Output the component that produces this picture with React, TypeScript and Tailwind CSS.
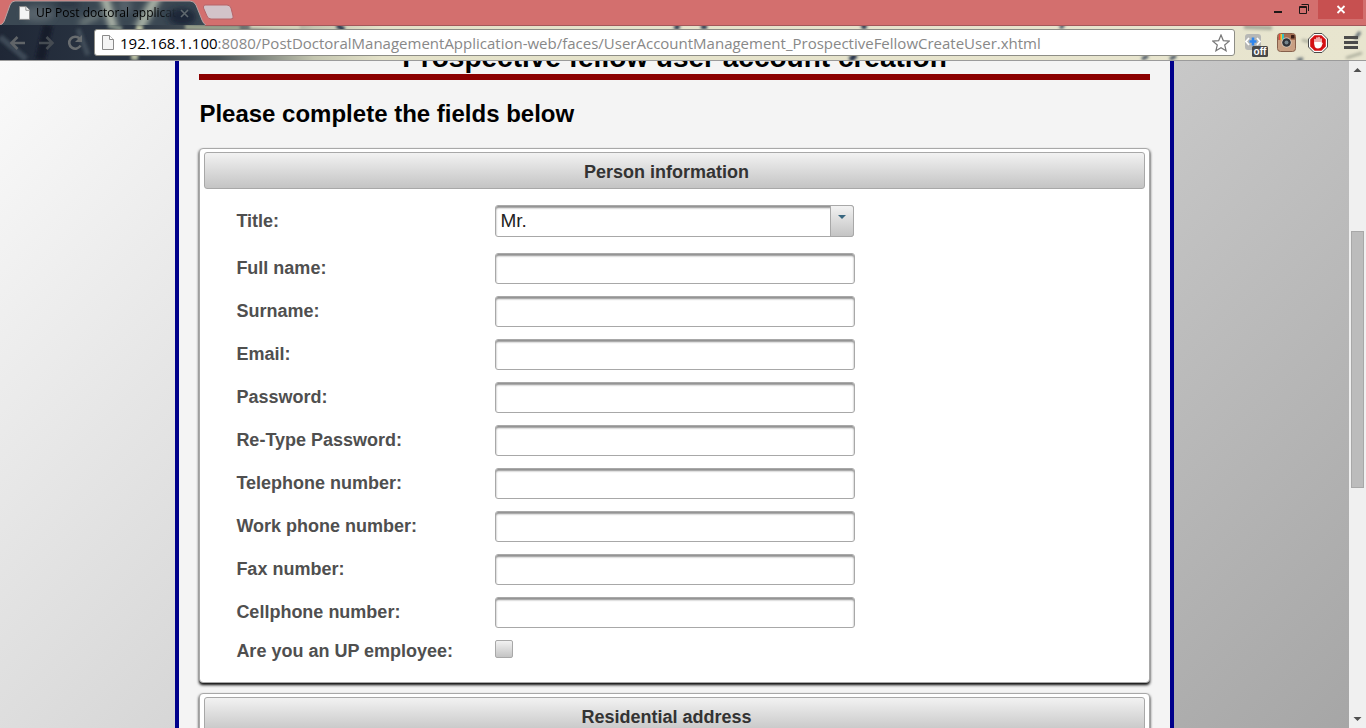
import React from "react";

type Field = { id: string; label: string; type: string };

const fields: Field[] = [
  { id: "fullName", label: "Full name:", type: "text" },
  { id: "surname", label: "Surname:", type: "text" },
  { id: "email", label: "Email:", type: "email" },
  { id: "password", label: "Password:", type: "password" },
  { id: "retype", label: "Re-Type Password:", type: "password" },
  { id: "telephone", label: "Telephone number:", type: "tel" },
  { id: "workPhone", label: "Work phone number:", type: "tel" },
  { id: "fax", label: "Fax number:", type: "tel" },
  { id: "cellphone", label: "Cellphone number:", type: "tel" },
];

const labelClass = "pb-0.5 text-lg leading-[22px] font-bold text-[#4f4f4f]";
const inputClass =
  "h-[31px] w-[360px] rounded-[3px] border border-[#a8a8a8] bg-white px-1 text-lg text-[#222222] shadow-[inset_0_2px_2px_#8f8f8f] outline-none";

function PageIcon({ className }: { className: string }) {
  return (
    <svg viewBox="0 0 12 15" className={className} aria-hidden="true">
      <path d="M.5 .5H7.5L11.5 4.5V14.5H.5Z" fill="#f4f4f4" stroke="#8a8a8a" />
      <path d="M7.5 .5V4.5H11.5" fill="#ffffff" stroke="#8a8a8a" />
    </svg>
  );
}

function TabShape() {
  return (
    <svg viewBox="0 0 206 25" className="absolute inset-0 h-full w-full" aria-hidden="true">
      <defs>
        <clipPath id="tabClip">
          <path d="M0 25C3 24 4 22 5 19L10 5Q11.500 1 15 1H190Q194 1 196 5L202 20Q203.500 24 206 25Z" />
        </clipPath>
        <filter id="tabBlur" x="-50%" y="-50%" width="200%" height="200%">
          <feGaussianBlur stdDeviation="3" />
        </filter>
      </defs>
      <g clipPath="url(#tabClip)">
        <rect width="206" height="25" fill="#3b4853" />
        <g filter="url(#tabBlur)">
          <ellipse cx="38" cy="14" rx="16" ry="8" fill="#56626a" />
          <ellipse cx="68" cy="4" rx="14" ry="4" fill="#2b3543" />
          <path d="M104 -5L114 30" stroke="#b9c1b2" strokeWidth="8" />
          <path d="M158 -5L138 30" stroke="#b0b9ab" strokeWidth="9" />
          <path d="M80 24L100 14" stroke="#7f8a88" strokeWidth="5" />
          <ellipse cx="125" cy="6" rx="7" ry="9" fill="#56626a" />
          <ellipse cx="182" cy="17" rx="14" ry="9" fill="#1c2839" />
        </g>
      </g>
      <path
        d="M0 25C3 24 4 22 5 19L10 5Q11.500 1 15 1H190Q194 1 196 5L202 20Q203.500 24 206 25"
        fill="none"
        stroke="#b9a4a4"
        strokeWidth="1"
      />
    </svg>
  );
}

function ToolbarTexture() {
  return (
    <svg
      viewBox="0 0 1366 35"
      preserveAspectRatio="none"
      className="absolute inset-0 h-full w-full"
      aria-hidden="true"
    >
      <defs>
        <linearGradient id="toolbarFill" x1="0" x2="1" y1="0" y2="0">
          <stop offset="0" stopColor="#1f2736" />
          <stop offset=".1" stopColor="#2c3745" />
          <stop offset=".16" stopColor="#4a5459" />
          <stop offset=".23" stopColor="#c4c6b0" />
          <stop offset=".28" stopColor="#e4e2c9" />
          <stop offset="1" stopColor="#e8e5cf" />
        </linearGradient>
        <filter id="toolbarBlur" x="-50%" y="-50%" width="200%" height="200%">
          <feGaussianBlur stdDeviation="1.500" />
        </filter>
      </defs>
      <rect width="1366" height="35" fill="url(#toolbarFill)" />
      <g filter="url(#toolbarBlur)" fill="none">
        <path d="M0 12L26 34" stroke="#3c4957" strokeWidth="6" />
        <path d="M48 0L40 35" stroke="#121a29" strokeWidth="10" />
        <path d="M78 4L88 30" stroke="#3f4c58" strokeWidth="5" />
        <path d="M108 0L122 4" stroke="#7f8c83" strokeWidth="5" />
        <path d="M140 0L134 35" stroke="#b9bfa2" strokeWidth="7" />
        <path d="M185 2L240 3" stroke="#9da58f" strokeWidth="5" />
        <path d="M250 1L300 2" stroke="#d8d7bd" strokeWidth="5" />
        <path d="M337 0L344 5" stroke="#26364b" strokeWidth="5" />
        <path d="M675 4L679 0" stroke="#26364b" strokeWidth="5" />
        <path d="M704 0V4" stroke="#1d2b44" strokeWidth="6" />
        <path d="M862 3L866 0M850 35L856 30" stroke="#1d2b44" strokeWidth="5" />
        <path d="M1060 3L1064 0M1142 34L1148 31M1170 34L1176 31" stroke="#26364b" strokeWidth="3" />
        <path d="M1244 2L1272 3" stroke="#a3a696" strokeWidth="4" />
        <path d="M1297 35L1303 34M1355 14L1360 7" stroke="#4d5a66" strokeWidth="3" />
        <path d="M1302 15L1310 17M1346 33L1362 28" stroke="#9a9d8d" strokeWidth="2" />
      </g>
    </svg>
  );
}

function BrowserChrome() {
  return (
    <header className="relative shrink-0 border-b border-[#9b9b9b] font-['Open_Sans','Noto_Sans',sans-serif]">
      <div className="flex h-[25px] justify-between bg-[#d36f6e]">
        <div className="flex">
          <div className="relative flex h-[25px] w-[206px] items-center pt-px pl-[19px]">
            <TabShape />
            <PageIcon className="relative h-[14px] w-[11px] shrink-0" />
            <span className="relative ml-1.5 w-[142px] overflow-hidden bg-gradient-to-r from-black from-85% to-transparent bg-clip-text text-xs leading-4 whitespace-nowrap text-transparent">
              UP Post doctoral application
            </span>
            <button aria-label="Close tab" className="relative ml-0.5 h-[9px] w-[9px]">
              <svg viewBox="0 0 9 9" className="h-full w-full">
                <path d="M1 1L8 8M8 1L1 8" stroke="#5f686e" strokeWidth="1.600" />
              </svg>
            </button>
          </div>
          <button aria-label="New tab" className="-ml-1 h-5 w-8 pt-1">
            <svg viewBox="0 0 32 16" className="h-4 w-8">
              <path
                d="M3 1H25Q28 1 29 4L31 12Q32 15 29 15H9Q6 15 5 12L1.500 4Q1 1 3 1Z"
                fill="#d2c3c9"
                stroke="#b66468"
              />
            </svg>
          </button>
        </div>
        <div className="flex h-5 items-start pr-[3px]">
          <button aria-label="Minimize" className="h-5 w-[27px]">
            <svg viewBox="0 0 27 20" className="h-full w-full">
              <path d="M10 11H18V13H10Z" fill="#1f1717" />
            </svg>
          </button>
          <button aria-label="Restore" className="h-5 w-[27px]">
            <svg viewBox="0 0 27 20" className="h-full w-full" fill="none" stroke="#1f1717">
              <path d="M8.500 6.500H15.500V13.500H8.500ZM8 7.500H16M10.500 4.500H17.500V11" />
            </svg>
          </button>
          <button aria-label="Close" className="h-[19px] w-[45px] bg-[#c75050]">
            <svg viewBox="0 0 45 19" className="h-full w-full">
              <path d="M19.500 6L26.500 13M26.500 6L19.500 13" stroke="#ffffff" strokeWidth="1.800" />
            </svg>
          </button>
        </div>
      </div>

      <div className="relative flex h-[35px] items-center pr-2 pl-2">
        <ToolbarTexture />
        <div className="absolute top-0 right-0 left-[205px] h-px bg-[#a2575a]" />
        <button aria-label="Back" className="relative h-[18px] w-[18px]">
          <svg viewBox="0 0 18 18" className="h-full w-full" fill="none" stroke="#606468" strokeWidth="2.600">
            <path d="M17 9H4M9.500 3L3.500 9L9.500 15" />
          </svg>
        </button>
        <button aria-label="Forward" className="relative ml-3 h-[18px] w-[18px]">
          <svg viewBox="0 0 18 18" className="h-full w-full" fill="none" stroke="#454b52" strokeWidth="2.600">
            <path d="M1 9H14M8.500 3L14.500 9L8.500 15" />
          </svg>
        </button>
        <button aria-label="Reload" className="relative ml-2.5 h-[18px] w-[18px]">
          <svg viewBox="0 0 18 18" className="h-full w-full" fill="none" stroke="#686c6f" strokeWidth="2.600">
            <path d="M13.500 4.500A6 6 0 1 0 14.500 11.500" />
            <path d="M16 1V8H9Z" fill="#686c6f" stroke="none" />
          </svg>
        </button>
        <div className="relative ml-2.5 flex h-[27px] min-w-0 flex-1 items-center rounded-[3px] border border-[#8d8d86] bg-white pr-1 pl-[7px]">
          <PageIcon className="h-[15px] w-3 shrink-0" />
          <div className="ml-1.5 min-w-0 flex-1 overflow-hidden text-[15px] leading-6 whitespace-nowrap text-[#888888]">
            <span className="text-black">192.168.1.100</span>
            :8080/PostDoctoralManagementApplication-web/faces/UserAccountManagement_ProspectiveFellowCreateUser.xhtml
          </div>
          <button aria-label="Bookmark" className="h-[18px] w-[18px] shrink-0">
            <svg viewBox="0 0 18 18" className="h-full w-full">
              <path
                d="M9 1L11.300 6.600L17.200 7.100L12.700 11L14.100 16.800L9 13.700L3.900 16.800L5.300 11L.8 7.100L6.700 6.600Z"
                fill="#ffffff"
                stroke="#777777"
                strokeWidth="1.200"
              />
            </svg>
          </button>
        </div>
        <div className="relative ml-2.5 flex h-7 items-center gap-2">
          <button aria-label="Extension off" className="h-7 w-6">
            <svg viewBox="0 0 24 28" className="h-full w-full">
              <rect x="0" y="5" width="16" height="16" rx="3" fill="#b6b7b5" />
              <path d="M4 9L1 12.500L4 16M12 9L15 12.500L12 16" fill="none" stroke="#ffffff" strokeWidth="1.700" />
              <path d="M8 8.500V16.500M4.500 12.500H11.500" stroke="#2f86ee" strokeWidth="2.600" />
              <rect x="7" y="17" width="16" height="11" rx="1.500" fill="#484848" />
              <text x="15" y="26" textAnchor="middle" fontSize="10" fontWeight="700" fill="#ffffff" fontFamily="Liberation Sans, sans-serif">
                off
              </text>
            </svg>
          </button>
          <button aria-label="Camera" className="h-[19px] w-[19px]">
            <svg viewBox="0 0 19 19" className="h-full w-full">
              <rect x=".5" y=".5" width="18" height="18" rx="3" fill="#c9a083" stroke="#86604c" />
              <path d="M1 7V3Q1 1 3 1H16Q18 1 18 3V7Z" fill="#a56f52" />
              <path d="M2 1H3.500V7H2Z" fill="#e4483c" />
              <path d="M3.500 1H5V7H3.500Z" fill="#f1c52f" />
              <path d="M5 1H7V7H5Z" fill="#34c3c4" />
              <rect x="14" y="2" width="3.500" height="3.500" rx=".6" fill="#3b1d16" />
              <circle cx="9.500" cy="9.500" r="5" fill="#e2d5c8" />
              <circle cx="9.500" cy="9.500" r="4.300" fill="#303238" />
              <circle cx="9.500" cy="9.500" r="2" fill="#76858d" />
            </svg>
          </button>
          <button aria-label="Content blocker" className="ml-1 h-5 w-5">
            <svg viewBox="0 0 20 20" className="h-full w-full">
              <path d="M6 .5H14L19.500 6V14L14 19.500H6L.5 14V6Z" fill="#ffffff" stroke="#4a4a4a" />
              <path d="M6.600 2.200H13.400L17.800 6.600V13.400L13.400 17.800H6.600L2.200 13.400V6.600Z" fill="#d40f12" />
              <path
                d="M7 11V6.500M9 9V4.800M11 9V4.500M13 10V6"
                stroke="#ffffff"
                strokeWidth="1.300"
                strokeLinecap="round"
              />
              <path d="M6.400 9H13.600V10.500L15 9.500L13.500 13.500Q12.500 15.500 10 15.500Q6.400 15.500 6.400 11.500Z" fill="#ffffff" />
            </svg>
          </button>
          <button aria-label="Menu" className="ml-2 h-[13px] w-[14px]">
            <svg viewBox="0 0 14 13" className="h-full w-full">
              <path d="M0 1.500H14M0 6.500H14M0 11.500H14" stroke="#4b4b4b" strokeWidth="3" />
            </svg>
          </button>
        </div>
      </div>
    </header>
  );
}

function Panel({ title, children }: { title: string; children?: React.ReactNode }) {
  return (
    <section className="rounded-[4px] border border-[#a8a8a8] bg-white px-1 pt-[3px] shadow-[0_2px_3px_#000000]">
      <h3 className="h-[37px] rounded-[3px] border border-[#a8a8a8] bg-gradient-to-b from-[#f2f2f2] to-[#c4c4c4] pr-4 text-center text-lg leading-[38px] font-bold text-[#333333]">
        {title}
      </h3>
      {children}
    </section>
  );
}

function ScrollBar() {
  return (
    <div className="flex w-[17px] shrink-0 flex-col items-center bg-[#f0f0f0]" aria-hidden="true">
      <svg viewBox="0 0 17 17" className="h-[17px] w-[17px] shrink-0">
        <path d="M4.500 11L8.500 7L12.500 11Z" fill="#505050" />
      </svg>
      <div className="grow-[153]" />
      <div className="w-[13px] grow-[256] border border-[#a8a8a8] bg-[#bcbcbc]" />
      <div className="grow-[224]" />
      <svg viewBox="0 0 17 17" className="h-[17px] w-[17px] shrink-0">
        <path d="M4.500 6L8.500 10L12.500 6Z" fill="#505050" />
      </svg>
    </div>
  );
}

export default function App() {
  return (
    <div className="flex h-screen flex-col overflow-hidden font-['Liberation_Sans',Arial,sans-serif]">
      <BrowserChrome />
      <div className="flex min-h-0 flex-1">
        <div className="min-w-0 flex-1 overflow-hidden bg-linear-135 from-[#fafafa] to-[#a6a6a6]">
          <main className="mx-auto flex w-[74%] flex-col border-x-4 border-[#00008b] bg-[#f4f4f4] px-5">
            <h1 className="-mt-5 border-b-[6px] border-[#8b0000] text-center text-[28px] leading-[33px] font-bold text-black">
              Prospective fellow user account creation
            </h1>
            <h2 className="mt-5 text-2xl leading-7 font-bold text-black">Please complete the fields below</h2>

            <div className="mt-5 flex flex-col gap-2.5">
              <Panel title="Person information">
                <form className="flex flex-col gap-3 px-8 pt-4 pb-[18px]">
                  <div className="mb-1 grid grid-cols-[259px_1fr] items-center">
                    <label htmlFor="title" className="text-lg leading-6 font-bold text-[#4f4f4f]">
                      Title:
                    </label>
                    <div className="relative h-8 w-[359px]">
                      <select
                        id="title"
                        className="h-full w-full appearance-none rounded-[3px] border border-[#a8a8a8] bg-white pr-6 pl-1 text-[19px] leading-6 text-[#222222] shadow-[inset_0_2px_2px_#8f8f8f] outline-none"
                      >
                        <option>Mr.</option>
                        <option>Mrs.</option>
                        <option>Ms.</option>
                        <option>Dr.</option>
                        <option>Prof.</option>
                      </select>
                      <span className="pointer-events-none absolute inset-y-0 right-0 flex w-6 justify-center rounded-r-[3px] border border-[#a8a8a8] bg-gradient-to-b from-[#f2f2f2] to-[#c4c4c4] pt-[9px]">
                        <svg viewBox="0 0 8 4" className="h-1 w-2">
                          <path d="M0 0H8L4 4Z" fill="#38667f" />
                        </svg>
                      </span>
                    </div>
                  </div>

                  {fields.map((f) => (
                    <div key={f.id} className="grid grid-cols-[259px_1fr] items-center">
                      <label htmlFor={f.id} className={labelClass}>
                        {f.label}
                      </label>
                      <input id={f.id} type={f.type} className={inputClass} />
                    </div>
                  ))}

                  <div className="grid grid-cols-[259px_1fr] items-start">
                    <label htmlFor="employee" className={labelClass}>
                      Are you an UP employee:
                    </label>
                    <input
                      id="employee"
                      type="checkbox"
                      className="h-[18px] w-[18px] appearance-none rounded-[2px] border border-[#a8a8a8] bg-gradient-to-b from-[#f2f2f2] to-[#c4c4c4]"
                    />
                  </div>
                </form>
              </Panel>
              <Panel title="Residential address" />
            </div>
          </main>
        </div>
        <ScrollBar />
      </div>
    </div>
  );
}
